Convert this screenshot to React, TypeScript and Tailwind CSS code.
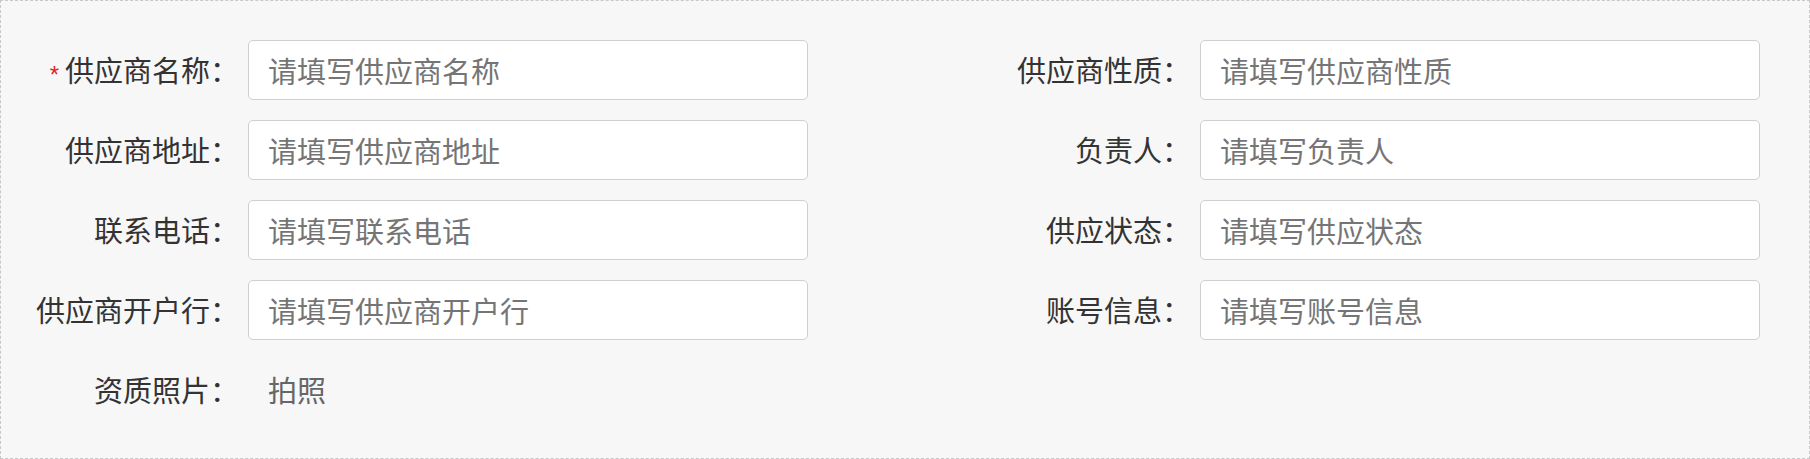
const FONT = "font-['Noto_Sans_CJK_SC','Noto_Sans',sans-serif]";

type Field = { label: string; placeholder: string; required?: boolean };

const LEFT: Field[] = [
  { label: '供应商名称', placeholder: '请填写供应商名称', required: true },
  { label: '供应商地址', placeholder: '请填写供应商地址' },
  { label: '联系电话', placeholder: '请填写联系电话' },
  { label: '供应商开户行', placeholder: '请填写供应商开户行' },
];

const RIGHT: Field[] = [
  { label: '供应商性质', placeholder: '请填写供应商性质' },
  { label: '负责人', placeholder: '请填写负责人' },
  { label: '供应状态', placeholder: '请填写供应状态' },
  { label: '账号信息', placeholder: '请填写账号信息' },
];

function Label({ text, required }: { text: string; required?: boolean }) {
  return (
    <div className="w-[220px] shrink-0 flex items-center justify-end pr-[9px] text-[29px] text-[#333]">
      {required && (
        <span className="font-['Liberation_Sans',sans-serif] text-[#e8231b] text-[24px] leading-none mr-[6px] mt-[10px]">*</span>
      )}
      <span>{text}：</span>
    </div>
  );
}

function Row({ field }: { field: Field }) {
  return (
    <div className="flex items-center h-[60px]">
      <Label text={field.label} required={field.required} />
      <input
        className="w-[560px] h-[60px] bg-white border border-[#cfcfcf] rounded-[5px] px-[19px] text-[29px] text-[#333] placeholder:text-[#757575] outline-none"
        placeholder={field.placeholder}
      />
    </div>
  );
}

export default function App() {
  return (
    <div className={`${FONT} w-[1810px] h-[459px] bg-[#f7f7f7] border border-dashed border-[#c8c8c8] pt-[39px] pl-[27px] pr-[49px]`}>
      <div className="flex justify-between">
        <div className="flex flex-col gap-[20px]">
          {LEFT.map((f) => (
            <Row key={f.label} field={f} />
          ))}
          <div className="flex items-center h-[60px]">
            <Label text="资质照片" />
            <span className="pl-[20px] text-[29px] text-[#666]">拍照</span>
          </div>
        </div>
        <div className="flex flex-col gap-[20px]">
          {RIGHT.map((f) => (
            <Row key={f.label} field={f} />
          ))}
        </div>
      </div>
    </div>
  );
}
